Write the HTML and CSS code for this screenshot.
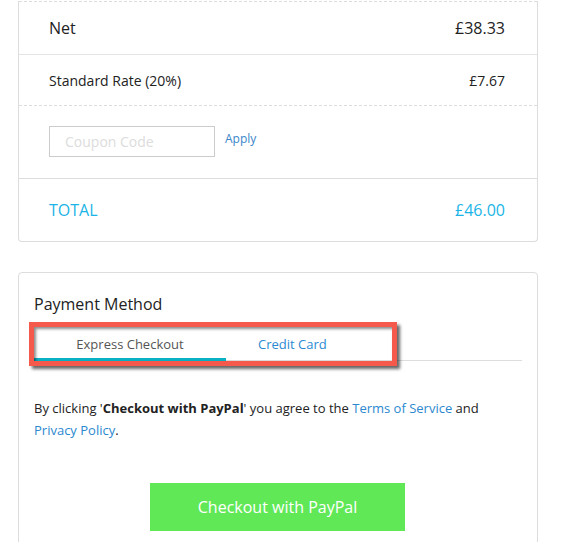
FILE: index.html
```html
<!DOCTYPE html>
<html lang="en">
<head>
<meta charset="utf-8">
<title>Checkout</title>
<link rel="stylesheet" href="styles.css">
</head>
<body>
<div class="page">
  <div class="card summary">
    <div class="row row-net">
      <span>Net</span>
      <span>£38.33</span>
    </div>
    <div class="row row-tax">
      <span>Standard Rate (20%)</span>
      <span>£7.67</span>
    </div>
    <div class="row row-coupon">
      <input class="coupon" type="text" placeholder="Coupon Code">
      <a class="apply" href="#">Apply</a>
    </div>
    <div class="row row-total">
      <span>TOTAL</span>
      <span>£46.00</span>
    </div>
  </div>

  <div class="card payment">
    <h2 class="heading">Payment Method</h2>
    <div class="tabs">
      <div class="tab active">Express Checkout</div>
      <div class="tab link">Credit Card</div>
      <div class="highlight"></div>
    </div>
    <p class="terms">By clicking '<b>Checkout with PayPal</b>' you agree to the <a href="#">Terms of Service</a> and <a href="#">Privacy Policy</a>.</p>
    <div class="actions">
      <button class="paypal" type="button">Checkout with PayPal</button>
    </div>
  </div>
</div>
</body>
</html>
```

FILE: styles.css
```css
* { box-sizing: border-box; }
html, body { margin: 0; padding: 0; background: #fff; }
body {
  font-family: "Open Sans", "DejaVu Sans", sans-serif;
  color: #222;
}
.page {
  width: 520px;
  margin-left: 18px;
  padding-top: 1px;
}
.card {
  border: 1px solid #ddd;
  border-radius: 4px;
  background: #fff;
}
.summary {
  border-top: none;
  border-radius: 0 0 4px 4px;
}
.row {
  display: flex;
  justify-content: space-between;
  align-items: center;
  padding: 0 32px 0 30px;
}
.row-net {
  border-top: 1px dashed #ddd;
  border-bottom: 1px solid #e4e4e4;
  height: 54px;
  font-size: 16px;
}
.row-tax {
  border-bottom: 1px dashed #ddd;
  height: 51px;
  font-size: 14px;
}
.row-coupon {
  border-bottom: 1px solid #ddd;
  height: 73px;
  justify-content: flex-start;
  align-items: flex-start;
  padding-top: 20px;
}
.coupon {
  width: 166px;
  height: 31px;
  border: 1px solid #ccc;
  padding: 0 0 0 15px;
  font-family: inherit;
  font-size: 14px;
  color: #555;
  outline: none;
}
.coupon::placeholder { color: #dcdcdc; }
.apply {
  margin-left: 10px;
  margin-top: 4px;
  font-size: 12px;
  color: #3a86c8;
  text-decoration: none;
}
.row-total {
  height: 62px;
  font-size: 16px;
  color: #1ab4e6;
}
.payment {
  margin-top: 30px;
  padding: 19px 15px 0 15px;
  min-height: 280px;
}
.heading {
  margin: 0;
  font-size: 16px;
  font-weight: 400;
  line-height: 24px;
  color: #222;
}
.tabs {
  position: relative;
  display: flex;
  margin-top: 10px;
  border-bottom: 1px solid #ddd;
}
.tab {
  font-size: 13px;
  line-height: 18px;
  padding: 9px 0 5px;
  border-bottom: 3px solid transparent;
  margin-bottom: -1px;
}
.tab.active {
  width: 192px;
  text-align: center;
  color: #555;
  border-bottom-color: #0ab0c4;
}
.tab.link {
  padding-left: 32px;
  color: #2b8bd2;
}
.highlight {
  position: absolute;
  left: -5px;
  top: -4px;
  width: 368px;
  height: 44px;
  border: 5px solid #f4594b;
  box-shadow: 3px 3px 3px rgba(0, 0, 0, 0.6), inset 2px 2px 3px rgba(0, 0, 0, 0.45);
  pointer-events: none;
}
.terms {
  margin: 36px 0 0;
  font-size: 13px;
  line-height: 22px;
  color: #222;
}
.terms b { font-weight: 700; }
.terms a {
  color: #2b88cf;
  text-decoration: none;
}
.actions {
  display: flex;
  justify-content: center;
  margin-top: 42px;
  padding-right: 1px;
}
.paypal {
  width: 255px;
  height: 48px;
  border: none;
  background: #61e857;
  color: #fff;
  font-family: inherit;
  font-size: 16px;
}
```
